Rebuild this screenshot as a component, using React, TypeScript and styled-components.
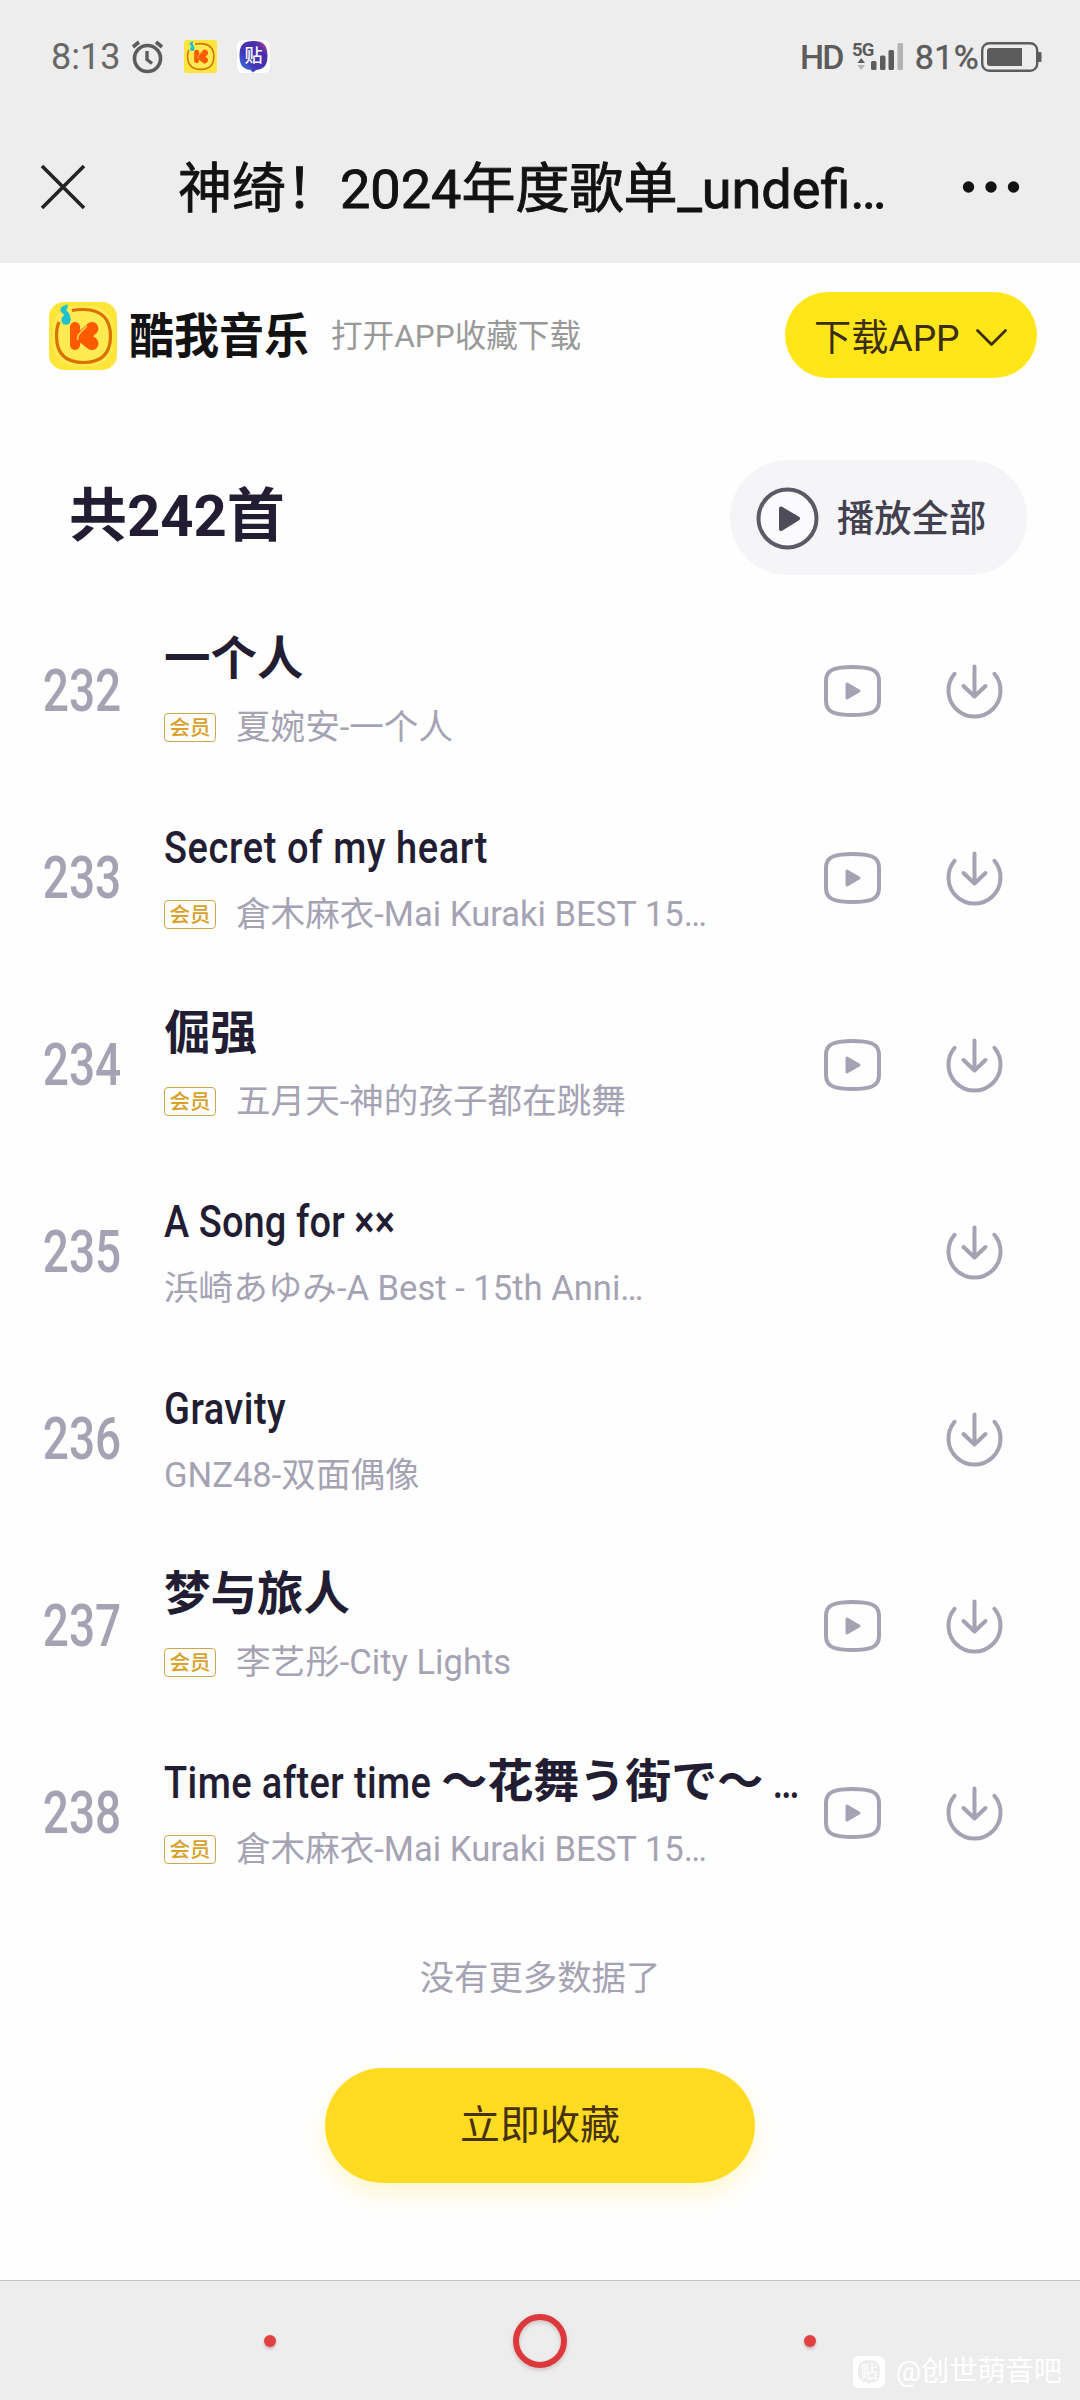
import React from 'react';
import styled, { createGlobalStyle } from 'styled-components';

const GlobalStyle = createGlobalStyle`
  * { box-sizing: border-box; }
  body {
    margin: 0;
    background: #fefefe;
    font-family: Roboto, "Noto Sans CJK SC", sans-serif;
  }
  button { font: inherit; border: 0; padding: 0; margin: 0; background: none; }
  svg { display: block; flex: none; overflow: visible; }
`;

const Screen = styled.div`
  width: 1080px;
  height: 2400px;
  display: flex;
  flex-direction: column;
  overflow: hidden;
  background: #fefefe;
`;

const TopArea = styled.header`
  height: 263px;
  flex: none;
  background: #ededed;
`;

const StatusBar = styled.div`
  height: 113px;
  padding: 0 38px 0 51px;
  display: flex;
  align-items: center;
  justify-content: space-between;
  color: #5c5c5c;
`;

const StatusGroup = styled.div`
  display: flex;
  align-items: center;
`;

const StatusIcons = styled.div`
  display: flex;
  align-items: center;
  gap: 20px;
`;

const Clock = styled.span`
  width: 80px;
  font-size: 36px;
  line-height: 40px;
  color: #686868;
`;

const StatusText = styled.span`
  font-size: 34px;
  line-height: 40px;
  font-weight: 500;
  white-space: nowrap;
`;

const HdText = styled(StatusText)`
  width: 52px;
  letter-spacing: -1.8px;
`;

const BatteryText = styled(StatusText)`
  width: 77px;
  font-weight: 400;
  text-align: right;
  padding-right: 2px;
  letter-spacing: 0.4px;
  -webkit-text-stroke: 0.5px #5c5c5c;
`;

const TitleBar = styled.div`
  height: 148px;
  display: flex;
  align-items: center;
  padding: 0 60px 0 40px;
`;

const PageTitle = styled.h1`
  flex: 1;
  margin: 5px 0 0 92px;
  font-size: 54px;
  line-height: 70px;
  font-weight: 400;
  -webkit-text-stroke: 0.9px #121212;
  color: #121212;
  white-space: nowrap;
`;

const Promo = styled.section`
  height: 146px;
  flex: none;
  display: flex;
  align-items: center;
  padding: 0 43px 0 49px;
`;

const Wordmark = styled.span`
  width: 202px;
  margin-left: 12px;
  font-size: 45px;
  line-height: 60px;
  font-weight: 700;
  color: #121212;
  white-space: nowrap;
  transform: translateY(1px) scaleY(1.07);
`;

const PromoHint = styled.span`
  flex: 1;
  font-size: 31.6px;
  line-height: 40px;
  color: #999;
  padding-top: 2px;
`;

const DownloadButton = styled.button`
  width: 252px;
  height: 86px;
  margin-top: -2px;
  border-radius: 43px;
  background: #ffe619;
  color: #3b2d12;
  font-size: 37.2px;
  line-height: 44px;
  display: flex;
  align-items: center;
  padding: 6px 0 0 29px;
  gap: 16px;
`;

const ListHeader = styled.section`
  height: 188px;
  flex: none;
  display: flex;
  align-items: center;
  justify-content: space-between;
  padding: 29px 53px 0 69px;
`;

const Count = styled.h2`
  margin: -4px 0 0;
  font-size: 58px;
  line-height: 70px;
  font-weight: 700;
  color: #221d33;
`;

const PlayAll = styled.button`
  width: 297px;
  height: 115px;
  border-radius: 58px;
  background: #f5f5f7;
  color: #43404f;
  font-size: 37.3px;
  font-weight: 500;
  line-height: 44px;
  display: flex;
  align-items: center;
  gap: 18px;
  padding: 2px 0 0 26px;
`;

const SongList = styled.ul`
  list-style: none;
  margin: 0;
  padding: 0;
  flex: none;
`;

const SongRow = styled.li`
  height: 187px;
  display: flex;
  align-items: center;
  padding-right: 77px;
`;

const Index = styled.span`
  width: 164px;
  flex: none;
  text-align: center;
  font-size: 46px;
  line-height: 60px;
  font-weight: 500;
  color: #a5a3b3;
  transform: scaleY(1.27);
`;

const Info = styled.div`
  width: 637px;
  height: 187px;
  padding-top: 35px;
  display: flex;
  flex-direction: column;
  gap: 21px;
`;

const SongTitle = styled.div<{ $size: number }>`
  height: 54px;
  font-size: ${(p) => p.$size}px;
  line-height: 54px;
  font-weight: 700;
  color: #221d33;
  white-space: nowrap;
`;

const Narrow = styled.span<{ $tracking: number }>`
  display: inline-block;
  font-size: 38px;
  line-height: 1;
  font-weight: 500;
  letter-spacing: ${(p) => p.$tracking}px;
  white-space: pre;
  transform: translateY(1px) scaleY(1.19);
  transform-origin: 0 84.2%;
`;

const SongMeta = styled.div`
  height: 40px;
  display: flex;
  align-items: center;
  gap: 20px;
  font-size: 34.6px;
  line-height: 40px;
  color: #a5a3b3;
  white-space: nowrap;
`;

const VipBadge = styled.span`
  width: 52px;
  height: 29px;
  margin-top: 1px;
  display: flex;
  align-items: center;
  justify-content: center;
  border: 1.5px solid #cfa650;
  border-radius: 4px;
  font-size: 20.5px;
  line-height: 25px;
  padding-top: 1px;
  font-weight: 500;
  color: #d8a12c;
`;

const Actions = styled.div`
  flex: 1;
  display: flex;
  justify-content: flex-end;
  gap: 65px;
  padding-top: 1px;
`;

const EndNote = styled.p`
  margin: 47px 0 0;
  text-align: center;
  font-size: 34.4px;
  line-height: 50px;
  color: #a5a3b3;
`;

const CollectButton = styled.button`
  align-self: center;
  width: 430px;
  height: 115px;
  margin-top: 65px;
  flex: none;
  border-radius: 58px;
  background: #ffdc22;
  box-shadow: 0 12px 22px rgba(255, 225, 60, 0.22);
  color: #47320f;
  font-size: 40px;
  line-height: 56px;
`;

const NavBar = styled.nav`
  position: relative;
  height: 120px;
  margin-top: auto;
  flex: none;
  border-top: 1px solid #c9c0bf;
  background: #ededed;
  display: flex;
  justify-content: center;
  align-items: center;
  gap: 237px;
`;

const NavDot = styled.span`
  width: 12px;
  height: 12px;
  border-radius: 50%;
  background: #e24144;
  box-shadow: 0 2px 3px rgba(120, 60, 60, 0.3);
`;

const NavRing = styled.span`
  width: 54px;
  height: 54px;
  border: 6px solid #dd383b;
  border-radius: 50%;
  filter: drop-shadow(0 2px 2px rgba(120, 60, 60, 0.25));
`;

const Watermark = styled.div`
  position: absolute;
  right: 18px;
  bottom: 8px;
  display: flex;
  align-items: center;
  gap: 11px;
  color: #fff;
  font-size: 28.2px;
  line-height: 40px;
  white-space: nowrap;
`;

const AlarmIcon = () => (
  <svg width="33" height="34" viewBox="0 0 33 34" fill="none" stroke="#5c5c5c">
    <circle cx="16.500" cy="18.500" r="13" strokeWidth="3.600" />
    <path d="M16 11v8.500l5 4" strokeWidth="3.400" />
    <path d="M2 7l6-5M31 7l-6-5" strokeWidth="3.600" />
  </svg>
);

const KuwoIcon = ({ size, radius }: { size: number; radius: number }) => (
  <svg width={size} height={size} viewBox="0 0 68 68">
    <rect width="68" height="68" rx={radius} fill="#ffe43a" />
    <rect x="4" y="4" width="60" height="60" rx="22" fill="#ffea52" />
    <path
      d="M23 8.500C27 7.500 31 7.400 35 7.500C53 8 61.500 17 61.500 34C61.500 51.500 53 60.500 34.500 60.500C16 60.500 7.500 51.500 7.500 34C7.500 28.500 8.200 24 10 20"
      fill="none"
      stroke="#d97200"
      strokeWidth="3.200"
    />
    <path d="M26 25v18" stroke="#ff5a00" strokeWidth="10" strokeLinecap="round" />
    <path
      d="M43 26.500L34 34.500L43 41.500"
      fill="none"
      stroke="#ff5a00"
      strokeWidth="13"
      strokeLinecap="round"
      strokeLinejoin="round"
    />
    <path d="M38 24L31 31Q28 34 28.500 38" fill="none" stroke="#ffd24a" strokeWidth="1.500" />
    <ellipse cx="17" cy="18" rx="4.600" ry="4.800" fill="#1cc2cf" />
    <path
      d="M18.500 2L12.500 5Q10 8 13 11Q16 13 17 18L21.500 18Q21.500 12 18 9Q16.500 7.500 18.500 6Z"
      fill="#1cc2cf"
    />
  </svg>
);

const TiebaIcon = () => (
  <svg width="33" height="33" viewBox="0 0 33 33">
    <defs>
      <linearGradient id="bubble" x1="0" y1="1" x2="1" y2="0">
        <stop offset="0" stopColor="#2f8df5" />
        <stop offset="0.350" stopColor="#4436b8" />
        <stop offset="0.750" stopColor="#4a2fa8" />
        <stop offset="1" stopColor="#e0529a" />
      </linearGradient>
    </defs>
    <rect width="33" height="33" rx="6" fill="#fff" />
    <path
      d="M16.500 1C26.500 1 30.500 5 30.500 15.500C30.500 25.500 27 29 19 30L16 32.500L13.500 30C6 29 2.500 25.500 2.500 15.500C2.500 5 6.500 1 16.500 1Z"
      fill="url(#bubble)"
    />
    <text
      x="16.500"
      y="22"
      textAnchor="middle"
      fontSize="18"
      fontWeight="500"
      fontFamily="Noto Sans CJK SC, sans-serif"
      fill="#fff"
    >
      贴
    </text>
  </svg>
);

const FiveG = styled.span`
  align-self: flex-start;
  width: 20px;
  margin: 1px -20px 0 0;
  font-size: 18.5px;
  line-height: 20px;
  font-weight: 700;
  letter-spacing: -0.8px;
  white-space: nowrap;
`;

const Signal = styled.div`
  display: flex;
  align-items: center;
  height: 36px;
`;

const SignalIcon = () => (
  <Signal>
    <FiveG>5G</FiveG>
    <svg width="52" height="30" viewBox="0 0 52 30" fill="#5c5c5c">
      <path d="M5.500 21h7.500l-3.750-5z" />
      <path d="M5.500 23h7.500l-3.750 5z" fill="#b4b4b4" />
      <rect x="19" y="19" width="5.500" height="9" rx="1.500" />
      <rect x="28" y="13.500" width="5.500" height="14.500" rx="1.500" />
      <rect x="36.500" y="8" width="5.500" height="20" rx="1.500" />
      <rect x="45.500" y="1" width="5.500" height="27" rx="1" fill="#b4b4b4" />
    </svg>
  </Signal>
);

const BatteryIcon = () => (
  <svg width="61" height="30" viewBox="0 0 61 30">
    <rect x="1.200" y="1.200" width="55" height="27.600" rx="7" fill="none" stroke="#5c5c5c" strokeWidth="2.400" />
    <path d="M9 6h32v18H9a3 3 0 0 1-3-3V9a3 3 0 0 1 3-3z" fill="#5c5c5c" />
    <rect x="57" y="10" width="3.500" height="10" rx="1" fill="#5c5c5c" />
  </svg>
);

const CloseIcon = () => (
  <svg width="46" height="46" viewBox="0 0 46 46" stroke="#232323" strokeWidth="3.600">
    <path d="M2 2l42 42M44 2L2 44" />
  </svg>
);

const MoreIcon = () => (
  <svg width="60" height="12" viewBox="0 0 60 12" fill="#121212">
    <circle cx="8.500" cy="6" r="5.700" />
    <circle cx="31" cy="6" r="5.700" />
    <circle cx="53.500" cy="6" r="5.700" />
  </svg>
);

const ChevronIcon = () => (
  <svg width="31" height="18" viewBox="0 0 31 18" fill="none" stroke="#3b2d12" strokeWidth="2.800">
    <path d="M1.500 1.500L15.500 15.500L29.500 1.500" strokeLinecap="round" strokeLinejoin="round" />
  </svg>
);

const PlayCircleIcon = () => (
  <svg width="63" height="63" viewBox="0 0 63 63">
    <circle cx="31.500" cy="31.500" r="29" fill="#fbfafc" stroke="#5d5a68" strokeWidth="4" />
    <path d="M25 21.500L42 31.500L25 42Z" fill="#4f4c5a" stroke="#4f4c5a" strokeWidth="4" strokeLinejoin="round" />
  </svg>
);

const VideoIcon = () => (
  <svg width="57" height="54" viewBox="0 0 57 54">
    <path
      d="M28.500 3C37 3 44 4 48 5.500C53 7.500 55 11 55 17V37C55 43 53 46.500 48 48.500C44 50 37 51 28.500 51C20 51 13 50 9 48.500C4 46.500 2 43 2 37V17C2 11 4 7.500 9 5.500C13 4 20 3 28.500 3Z"
      fill="none"
      stroke="#a5a3b3"
      strokeWidth="4"
    />
    <path d="M23 20L35 27L23 34Z" fill="#a5a3b3" stroke="#a5a3b3" strokeWidth="3" strokeLinejoin="round" />
  </svg>
);

const DownloadIcon = () => (
  <svg width="57" height="54" viewBox="0 0 57 54" fill="none" stroke="#a5a3b3" strokeWidth="4" strokeLinecap="round">
    <path d="M8.600 9.800A26 26 0 1 0 48.400 9.800" />
    <path d="M28.500 2.500V32M17.500 22L28.500 32.500L39.500 22" strokeLinejoin="round" />
  </svg>
);

const WatermarkIcon = () => (
  <svg width="32" height="32" viewBox="0 0 32 32">
    <rect width="32" height="32" rx="6" fill="#fff" />
    <path
      d="M16 4C24 4 27 7 27 15.500C27 24 24 26 18 26.500L16 29L14 26.500C8 26 5 24 5 15.500C5 7 8 4 16 4Z"
      fill="#ededed"
    />
    <text
      x="16"
      y="21.500"
      textAnchor="middle"
      fontSize="17"
      fontFamily="Noto Sans CJK SC, sans-serif"
      fill="#fff"
    >
      贴
    </text>
  </svg>
);

type Part = { text: string; tracking?: number };
type Song = { no: number; title: Part[]; titleSize?: number; meta: string; vip?: boolean; video?: boolean };

const songs: Song[] = [
  { no: 232, title: [{ text: '一个人' }], meta: '夏婉安-一个人', vip: true, video: true },
  {
    no: 233,
    title: [{ text: 'Secret of my heart', tracking: 0.6 }],
    meta: '倉木麻衣-Mai Kuraki BEST 15…',
    vip: true,
    video: true,
  },
  { no: 234, title: [{ text: '倔强' }], meta: '五月天-神的孩子都在跳舞', vip: true, video: true },
  { no: 235, title: [{ text: 'A Song for ××', tracking: 0.1 }], meta: '浜崎あゆみ-A Best - 15th Anni…' },
  { no: 236, title: [{ text: 'Gravity', tracking: 0.5 }], meta: 'GNZ48-双面偶像' },
  { no: 237, title: [{ text: '梦与旅人' }], meta: '李艺彤-City Lights', vip: true, video: true },
  {
    no: 238,
    titleSize: 46,
    title: [
      { text: 'Time after time ', tracking: 0.4 },
      { text: '〜花舞う街で〜' },
      { text: ' …', tracking: 0 },
    ],
    meta: '倉木麻衣-Mai Kuraki BEST 15…',
    vip: true,
    video: true,
  },
];

export default function App() {
  return (
    <Screen>
      <GlobalStyle />
      <TopArea>
        <StatusBar>
          <StatusGroup>
            <Clock>8:13</Clock>
            <StatusIcons>
              <AlarmIcon />
              <KuwoIcon size={33} radius={6} />
              <TiebaIcon />
            </StatusIcons>
          </StatusGroup>
          <StatusGroup>
            <HdText>HD</HdText>
            <SignalIcon />
            <BatteryText>81%</BatteryText>
            <BatteryIcon />
          </StatusGroup>
        </StatusBar>
        <TitleBar>
          <CloseIcon />
          <PageTitle>神绮！2024年度歌单_undefi…</PageTitle>
          <MoreIcon />
        </TitleBar>
      </TopArea>

      <Promo>
        <KuwoIcon size={68} radius={15} />
        <Wordmark>酷我音乐</Wordmark>
        <PromoHint>打开APP收藏下载</PromoHint>
        <DownloadButton>
          下载APP
          <ChevronIcon />
        </DownloadButton>
      </Promo>

      <ListHeader>
        <Count>共242首</Count>
        <PlayAll>
          <PlayCircleIcon />
          播放全部
        </PlayAll>
      </ListHeader>

      <SongList>
        {songs.map((song) => (
          <SongRow key={song.no}>
            <Index>{song.no}</Index>
            <Info>
              <SongTitle $size={song.titleSize ?? 46.5}>
                {song.title.map((part, i) =>
                  part.tracking !== undefined ? (
                    <Narrow key={i} $tracking={part.tracking}>
                      {part.text}
                    </Narrow>
                  ) : (
                    <span key={i}>{part.text}</span>
                  )
                )}
              </SongTitle>
              <SongMeta>
                {song.vip && <VipBadge>会员</VipBadge>}
                <span>{song.meta}</span>
              </SongMeta>
            </Info>
            <Actions>
              {song.video && <VideoIcon />}
              <DownloadIcon />
            </Actions>
          </SongRow>
        ))}
      </SongList>

      <EndNote>没有更多数据了</EndNote>
      <CollectButton>立即收藏</CollectButton>

      <NavBar>
        <NavDot />
        <NavRing />
        <NavDot />
        <Watermark>
          <WatermarkIcon />
          @创世萌音吧
        </Watermark>
      </NavBar>
    </Screen>
  );
}
